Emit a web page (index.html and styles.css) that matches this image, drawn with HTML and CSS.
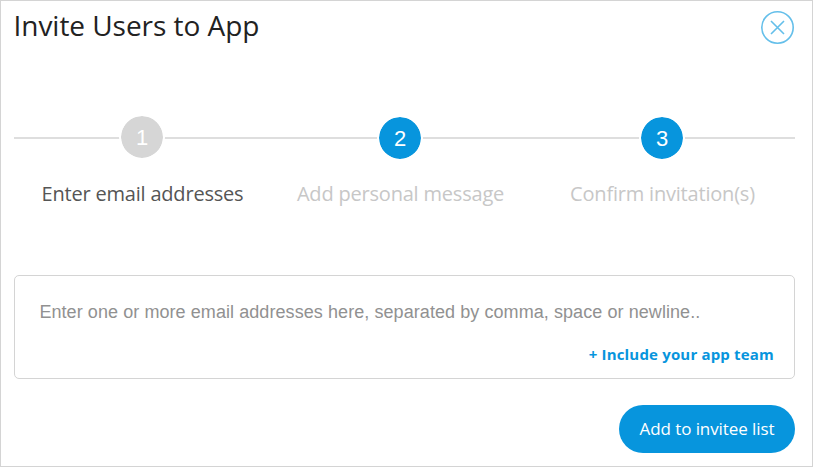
FILE: index.html
```html
<!DOCTYPE html>
<html lang="en">
<head>
<meta charset="utf-8">
<title>Invite Users to App</title>
<link rel="stylesheet" href="styles.css">
</head>
<body>
<main class="dialog">
  <header class="header">
    <h1 class="title">Invite Users to App</h1>
    <button class="close" aria-label="Close">
      <svg width="34" height="34" viewBox="0 0 34 34" fill="none" stroke="#64bfea" stroke-width="1.6"><circle cx="16.5" cy="17.5" r="15.7"/><path d="M10 11l13 13M23 11l-13 13"/></svg>
    </button>
  </header>
  <ol class="steps">
    <li class="step step-done"><span class="badge">1</span><span class="label">Enter email addresses</span></li>
    <li class="step"><span class="badge">2</span><span class="label">Add personal message</span></li>
    <li class="step"><span class="badge">3</span><span class="label">Confirm invitation(s)</span></li>
  </ol>
  <section class="entry">
    <div class="placeholder">Enter one or more email addresses here, separated by comma, space or newline..</div>
    <a class="team">+ Include your app team</a>
  </section>
  <footer class="footer"><button class="add">Add to invitee list</button></footer>
</main>
</body>
</html>
```
FILE: styles.css
```css
* { box-sizing: border-box; }
body { margin: 0; background: #fff; font-family: "Open Sans", sans-serif; }
.dialog { height: 467px; border: 1px solid #d4d4d4; padding: 0 17px 0 13px; }
.header { display: flex; justify-content: space-between; height: 115px; }
.title { margin: 5px 0 0 -0.5px; font-size: 28px; line-height: 38px; font-weight: 400; letter-spacing: -0.04px; color: #222; }
.close { width: 34px; height: 34px; margin-top: 9px; padding: 0; border: 0; background: none; }
.close svg { display: block; }
.steps { display: grid; grid-template-columns: 257px 259px 265px; height: 159px; margin: 0; padding: 0; list-style: none; background: linear-gradient(#dedede, #dedede) 0 21px / 100% 2px no-repeat; }
.step { display: flex; flex-direction: column; align-items: center; color: #c7c7c7; }
.badge { width: 46px; height: 46px; margin: -1.5px 1px 0 0; border: 2px solid #fff; border-radius: 50%; background: #0795dd; background-clip: padding-box; color: #fff; font: 22px/44px "Liberation Sans", sans-serif; text-align: center; }
.step-done { color: #555; }
.step-done .badge { margin-top: -2px; margin-bottom: 0.5px; background-color: #d6d6d6; }
.label { margin-top: 19.5px; font-size: 20px; line-height: 28px; letter-spacing: -0.2px; white-space: nowrap; }
.entry { display: flex; flex-direction: column; height: 104px; border: 1px solid #d4d4d4; border-radius: 5px; padding: 24px 20px 0 24.4px; }
.placeholder { font: 18px/24px "Liberation Sans", sans-serif; letter-spacing: 0.072px; color: #919191; white-space: nowrap; }
.team { margin-top: 20px; align-self: flex-end; font-size: 15px; line-height: 20px; font-weight: 700; letter-spacing: 0.18px; color: #0795dd; }
.footer { display: flex; justify-content: flex-end; margin-top: 26px; }
.add { width: 176px; height: 48px; padding: 0; border: 0; border-radius: 24px; background: #0795dd; color: #fff; font: 17px/24px "Open Sans", sans-serif; letter-spacing: -0.09px; }
```
